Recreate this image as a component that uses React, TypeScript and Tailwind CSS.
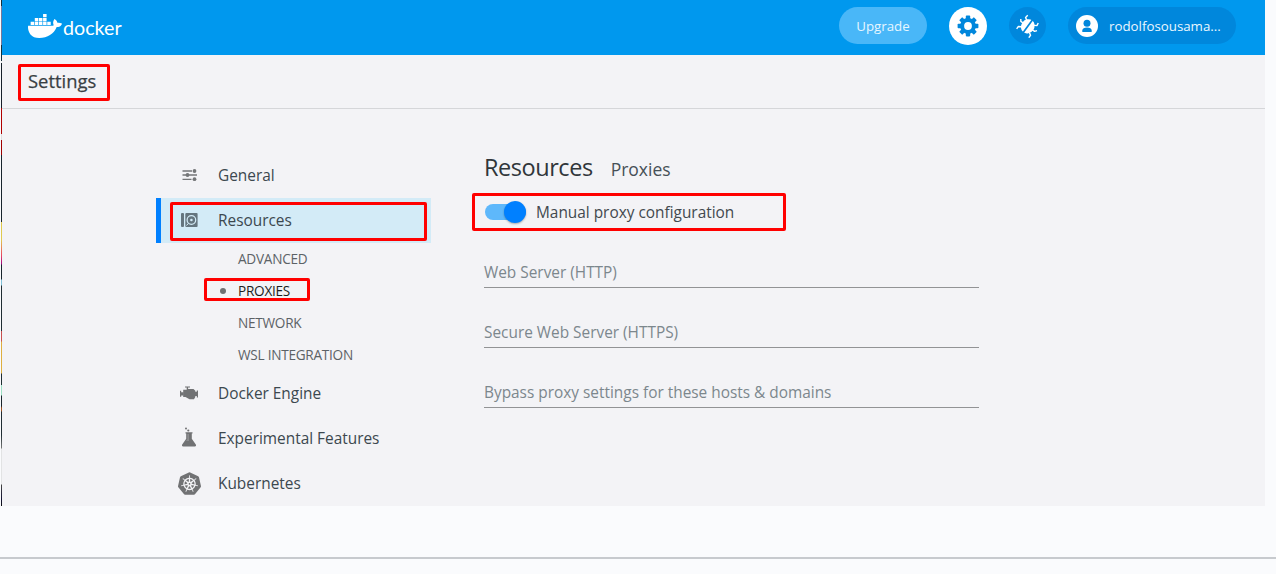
import type { ReactNode } from "react";
import { FaDocker } from "react-icons/fa";
import { SiKubernetes } from "react-icons/si";

function GearIcon() {
  return (
    <svg width="22" height="22" viewBox="-11 -11 22 22" fill="#0087dc">
      {[0, 45, 90, 135].map((a) => (
        <rect key={a} x="-2.2" y="-10.4" width="4.4" height="20.8" rx="0.8" transform={`rotate(${a})`} />
      ))}
      <circle r="7.9" />
      <circle r="3.9" fill="#fff" />
    </svg>
  );
}

function BugIcon() {
  return (
    <svg width="24" height="24" viewBox="-12 -12 24 24" fill="none" stroke="#fff" strokeWidth="1.4" strokeLinejoin="round">
      <g transform="rotate(36)">
        <ellipse cx="0" cy="0.4" rx="6.6" ry="7.4" fill="#fff" stroke="none" />
        <path d="M-4.500-4L-7-5.500L-6.500-8.500M-5.500 0.500H-8.500L-10-1.500M-5 4.500L-7.500 6V9M4.500-4L7-5.500L6.500-8.500M5.500 0.500H8.500L10-1.500M5 4.500L7.500 6V9" />
        <path d="M0-8V9" stroke="#0087dc" strokeWidth="1.700" />
      </g>
    </svg>
  );
}

function AvatarIcon() {
  return (
    <svg width="22" height="22" viewBox="0 0 22 22">
      <circle cx="11" cy="11" r="11" fill="#fff" />
      <circle cx="11" cy="8.200" r="3.500" fill="#0087dc" />
      <path d="M6.300 17v-1.400c0-2 2-3 4.700-3s4.700 1 4.700 3V17z" fill="#0087dc" />
    </svg>
  );
}

function SlidersIcon() {
  return (
    <svg className="mb-[2px]" width="16" height="14" viewBox="0 0 16 14" fill="#747678" stroke="#747678" strokeWidth="1.3">
      <path d="M.5 3H10M.5 7H15M.5 11.300H9.500" />
      <g stroke="none">
        <circle cx="12.500" cy="3" r="1.900" />
        <circle cx="5.500" cy="7" r="1.900" />
        <circle cx="12.500" cy="11.200" r="1.900" />
      </g>
    </svg>
  );
}

function DiskIcon() {
  return (
    <svg className="mb-px" width="17" height="14" viewBox="0 0 17 14" fill="#65757e">
      <rect width="3" height="14" rx="1" />
      <rect x="4.300" width="12.300" height="14" rx="1" />
      <circle cx="10.400" cy="7" r="4.300" fill="none" stroke="#d3ebf7" strokeWidth="1.200" />
      <circle cx="10.400" cy="7" r="1.300" fill="#d3ebf7" />
      <path d="M5.500 12.500L7.300 10.500" stroke="#d3ebf7" />
    </svg>
  );
}

function EngineIcon() {
  return (
    <svg className="mb-px mr-px" width="18" height="14" viewBox="0 0 18 14" fill="#717274">
      <path d="M5 0.500h5v1.100H8.100V3H13.500l1.800 1.800V11L14 13.300H9.500L5.500 11H3.200V3.700h3.500V1.600H5z" />
      <path d="M0 4.800h1.200v1.400h2.500v3.200H1.200v1.400H0zM15 5.800h1.800V4.500H18v7h-1.200V10H15z" />
    </svg>
  );
}

function FlaskIcon() {
  return (
    <svg className="mb-[3px] mr-px" width="14" height="20" viewBox="0 0 14 20" fill="#717274">
      <circle cx="4" cy="1.500" r="1" />
      <circle cx="6.300" cy="3.500" r="1.100" />
      <path d="M3.500 5.300h7v1.200h-.7v5.200l4 5.900c.6 1 0 1.900-1 1.900H1.200c-1 0-1.600-.900-1-1.900l4-5.900V6.500h-.7z" />
      <path d="M5.300 7v5L4 14h3V7z" fill="#a5a6a8" opacity="0.500" />
    </svg>
  );
}

function RedFrame({ className }: { className: string }) {
  return <span className={`pointer-events-none absolute z-10 rounded-[2px] border-[3px] border-[#ff0000] ${className}`} />;
}

function NavItem({ icon, label, active = false }: { icon: ReactNode; label: string; active?: boolean }) {
  return (
    <li
      className={
        active
          ? "relative flex h-[45px] items-center border-l-[5px] border-[#0080ff] bg-[#d3ebf7]"
          : "flex h-[45px] items-center border-l-[5px] border-transparent"
      }
    >
      <span className="flex w-[57px] items-center justify-center">{icon}</span>
      <span className="whitespace-nowrap text-[15.4px] leading-5 text-[#3c484f]">{label}</span>
      {active && <RedFrame className="left-[9px] top-[4px] h-[39px] w-[257px]" />}
    </li>
  );
}

function SubItem({ label, active = false }: { label: string; active?: boolean }) {
  return (
    <li className="relative flex h-8 items-center pl-[64px]">
      <span className={active ? "mr-[12px] size-[6px] rounded-full bg-[#6f7072]" : "mr-[12px] size-[6px]"} />
      <span
        className={
          active
            ? "whitespace-nowrap text-[13.6px] tracking-[-0.25px] text-[#1b1f22]"
            : "whitespace-nowrap text-[13.6px] tracking-[-0.25px] text-[#5c6266]"
        }
      >
        {label}
      </span>
      {active && <RedFrame className="left-[48px] top-[3px] h-[23px] w-[106px]" />}
    </li>
  );
}

function Field({ label }: { label: string }) {
  return (
    <label className="flex h-[60px] flex-col justify-end border-b border-[#929395] pb-[3px] text-[15.4px] leading-[22px] text-[#7c878d]">
      {label}
    </label>
  );
}

export default function App() {
  return (
    <div className="h-[574px] w-[1276px] overflow-hidden bg-[#fafbfd] font-['Open_Sans','Noto_Sans',sans-serif]">
      <div className="flex h-[506px] w-[1265px] pl-px">
        <div className="w-px shrink-0 bg-[linear-gradient(180deg,#17303c_0_6px,#779_6px_45px,#17303c_45px_61px,#eee_61px_63px,#17202a_63px_108px,#b00000_108px_134px,#ddd_134px_140px,#a00000_140px_155px,#18242c_155px_222px,#dfc94f_222px_240px,#e94960_255px,#a00880_264px,#18242c_265px_279px,#80c0d8_280px_285px,#202d33_286px_331px,#c85050_331px_341px,#deaf40_342px_373px,#202d33_374px_385px,#9de0c4_385px_395px,#18242c_396px_406px,#a05020_408px_411px,#202d33_412px_435px,#777_448px,#e2e3e4_449px_484px,#444_485px,#101030_500px,#111_506px)]" />
        <div className="flex min-w-0 flex-1 flex-col bg-[#f3f3f6]">
          <header className="flex h-[55px] shrink-0 items-center bg-[#0098ee] pb-[4px] pl-[26px] pr-[29px] text-white">
            <FaDocker className="h-[28px] w-[34px]" />
            <span className="ml-[1px] pt-[4px] font-['Lato','Open_Sans',sans-serif] text-[19.7px] leading-none">docker</span>
            <div className="ml-auto flex items-center">
              <button className="h-[37px] w-[88px] rounded-full bg-[#49b7f8] pt-[2px] text-[13.3px] text-[#e6f6ff]">Upgrade</button>
              <button className="ml-[22px] flex size-[38px] items-center justify-center rounded-full bg-white">
                <GearIcon />
              </button>
              <button className="ml-[22px] flex size-[37px] items-center justify-center rounded-full bg-[#0087dc]">
                <BugIcon />
              </button>
              <button className="ml-[22px] flex h-[37px] w-[168px] items-center rounded-full bg-[#0087dc] pl-[8px] text-[13.3px] text-[#eaf7ff]">
                <AvatarIcon />
                <span className="ml-[11px] pt-[2px]">rodolfosousama...</span>
              </button>
            </div>
          </header>

          <div className="relative flex h-[54px] shrink-0 items-center border-b border-[#d5d6d9] pb-px pl-[26px]">
            <h1 className="text-[18.4px] font-medium leading-6 text-[#393f44] [-webkit-text-stroke:0.25px_#393f44]">Settings</h1>
            <RedFrame className="left-[16px] top-[9px] h-[37px] w-[92px]" />
          </div>

          <div className="flex min-h-0 flex-1">
            <ul className="ml-[154px] mt-[44px] w-[275px] shrink-0">
              <NavItem icon={<SlidersIcon />} label="General" />
              <NavItem icon={<DiskIcon />} label="Resources" active />
              <SubItem label="ADVANCED" />
              <SubItem label="PROXIES" active />
              <SubItem label="NETWORK" />
              <SubItem label="WSL INTEGRATION" />
              <NavItem icon={<EngineIcon />} label="Docker Engine" />
              <NavItem icon={<FlaskIcon />} label="Experimental Features" />
              <NavItem icon={<SiKubernetes className="size-[23px] text-[#717274]" />} label="Kubernetes" />
            </ul>

            <main className="ml-[53px] mt-[41px] w-[495px]">
              <div className="flex h-[43px] items-baseline">
                <h2 className="text-[23.5px] leading-[34px] tracking-[-0.45px] text-[#30363a]">Resources</h2>
                <span className="ml-[18px] text-[17.5px] text-[#465056]">Proxies</span>
              </div>
              <div className="relative flex h-[38px] items-center">
                <span className="ml-px flex h-[16px] w-[41px] items-center justify-end rounded-full bg-[#5eb8fb]">
                  <span className="size-[22px] shrink-0 rounded-full bg-[#0080ff] shadow-[0_1px_2px_rgba(0,0,0,0.3)]" />
                </span>
                <span className="ml-[10px] pt-px text-[15.4px] text-[#42494e]">Manual proxy configuration</span>
                <RedFrame className="left-[-12px] top-0 h-[38px] w-[314px]" />
              </div>
              <div className="-mt-[3px]">
                <Field label="Web Server (HTTP)" />
                <Field label="Secure Web Server (HTTPS)" />
                <Field label="Bypass proxy settings for these hosts & domains" />
              </div>
            </main>
          </div>
        </div>
      </div>
      <div className="mt-[51px] h-[2px] bg-[#c7cace]" />
    </div>
  );
}
